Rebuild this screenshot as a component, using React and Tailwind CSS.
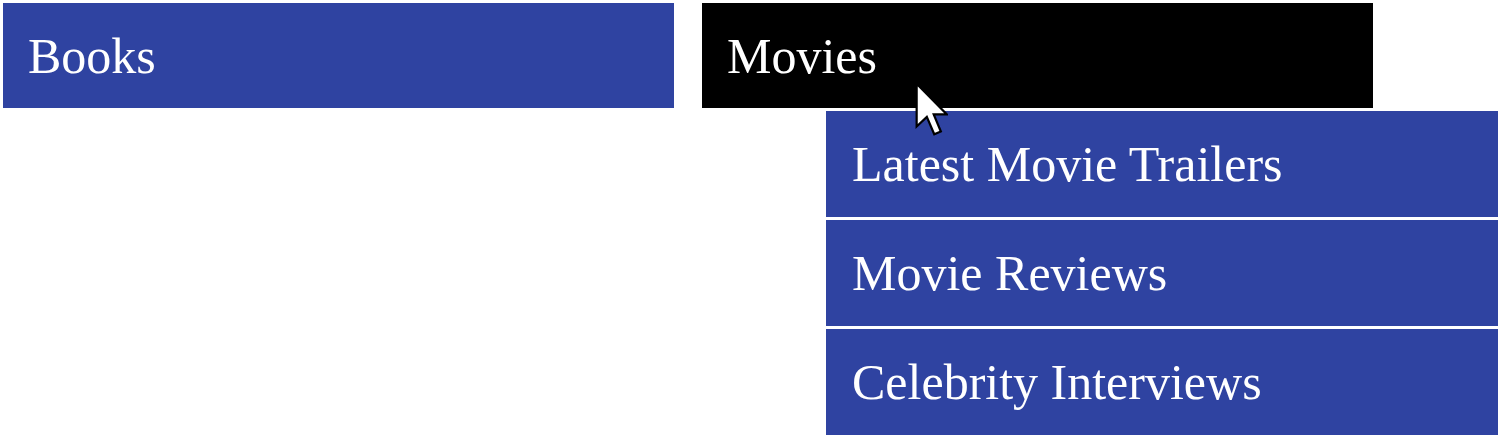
import React from "react";

const menu = [
  { label: "Books", items: [] },
  { label: "Movies", items: ["Latest Movie Trailers", "Movie Reviews", "Celebrity Interviews"], open: true },
];

function Cursor() {
  return (
    <svg
      className="absolute left-[213px] top-[79px] w-[33px] h-[55px]"
      viewBox="0 0 12 20"
      fill="none"
    >
      <path
        d="M0.6 0.6 L0.6 16.2 L4.3 12.7 L7 19 L9.4 18 L6.8 11.8 L11.6 11.8 Z"
        fill="#ffffff"
        stroke="#000000"
        strokeWidth="0.8"
        strokeLinejoin="miter"
      />
    </svg>
  );
}

export default function App() {
  return (
    <div className="w-[1500px] h-[438px] bg-white overflow-hidden" style={{ fontFamily: '"Liberation Serif", "Times New Roman", serif' }}>
      <ul className="flex gap-[28px] p-[3px]">
        {menu.map((m) => (
          <li key={m.label} className="relative">
            <div
              className={`w-[671px] h-[105px] flex items-center pl-[25px] text-white text-[50px] leading-none ${
                m.open ? "bg-black" : "bg-[#2f43a1]"
              }`}
            >
              {m.label}
            </div>
            {m.open && (
              <>
                <ul className="absolute left-[124px] top-[108px] flex flex-col gap-[3px]">
                  {m.items.map((it) => (
                    <li
                      key={it}
                      className="w-[672px] h-[106px] flex items-center pl-[26px] bg-[#2f43a1] text-white text-[50px] leading-none whitespace-nowrap"
                    >
                      {it}
                    </li>
                  ))}
                </ul>
                <Cursor />
              </>
            )}
          </li>
        ))}
      </ul>
    </div>
  );
}
